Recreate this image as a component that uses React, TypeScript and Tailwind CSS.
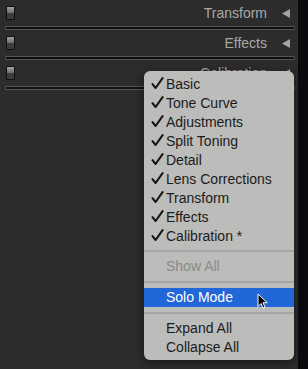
const PANELS = ['Transform', 'Effects', 'Calibration']

const CHECKED = [
  'Basic',
  'Tone Curve',
  'Adjustments',
  'Split Toning',
  'Detail',
  'Lens Corrections',
  'Transform',
  'Effects',
  'Calibration *',
]

export default function App() {
  return (
    <div className="relative flex h-[369px] w-[308px] overflow-hidden font-['Liberation_Sans',Arial,sans-serif]">
      {/* Panel column */}
      <div className="flex-1 bg-[#2c2c2c] pt-0">
        {PANELS.map((name) => (
          <div key={name}>
            <div className="flex h-[26px] items-center pl-[6px] pr-[8px]">
              <Switch />
              <span className="ml-auto text-[14px] leading-none text-[#a9a9a9]">{name}</span>
              <svg className="ml-[15px] h-[9px] w-[8px]" viewBox="0 0 8 9">
                <path d="M0 4.5 8 0v9Z" fill="#a4a4a4" />
              </svg>
            </div>
            <div className="mx-[5px] mr-[3px] h-[4px] rounded-[1px] border border-[#555] bg-[#0f0f0f]" />
          </div>
        ))}
      </div>
      <div className="w-[10px] bg-[#0b0b0f]" />

      {/* Context menu */}
      <div className="absolute left-[144px] top-[71px] w-[150px] rounded-[6px] bg-[#bcbcba] pb-[3px] pt-[3px] text-[14px] text-[#1b1b1b] shadow-[0_2px_8px_rgba(0,0,0,0.5)]">
        {CHECKED.map((label) => (
          <div key={label} className="flex h-[19px] items-center">
            <span className="flex w-[22px] justify-end pr-[2px]">
              <Check />
            </span>
            <span className="leading-none">{label}</span>
          </div>
        ))}
        <Separator />
        <div className="flex h-[19px] items-center pl-[22px] text-[#8a8a89]">Show All</div>
        <Separator />
        <div className="relative flex h-[19px] items-center bg-[#2267d8] pl-[22px] text-white">
          Solo Mode
          <Cursor />
        </div>
        <Separator />
        <div className="flex h-[19px] items-center pl-[22px]">Expand All</div>
        <div className="flex h-[19px] items-center pl-[22px]">Collapse All</div>
      </div>
    </div>
  )
}

function Separator() {
  return (
    <div className="flex h-[12px] items-center">
      <div className="h-[2px] w-full bg-[#a6a6a4]" />
    </div>
  )
}

function Switch() {
  return (
    <div className="flex h-[14px] w-[9px] flex-col overflow-hidden rounded-[1px] border border-[#0e0e0e]">
      <div className="h-1/2 bg-gradient-to-b from-[#a2a2a2] to-[#6c6c6c]" />
      <div className="h-1/2 bg-[#3c3c3c]" />
    </div>
  )
}

function Check() {
  return (
    <svg className="h-[13px] w-[13px]" viewBox="0 0 13 13">
      <path
        d="M1.5 7.2 4.6 11 11.6 1.2"
        fill="none"
        stroke="#161616"
        strokeWidth={2.1}
        strokeLinecap="round"
        strokeLinejoin="round"
      />
    </svg>
  )
}

function Cursor() {
  return (
    <svg className="absolute left-[113px] top-[5px] h-[16px] w-[11px]" viewBox="0 0 11 16">
      <path
        d="M1 1v12.5l3-3 2 4.5 2-.9-2-4.4h4.2Z"
        fill="#000"
        stroke="#fff"
        strokeWidth={1}
        strokeLinejoin="round"
      />
    </svg>
  )
}
